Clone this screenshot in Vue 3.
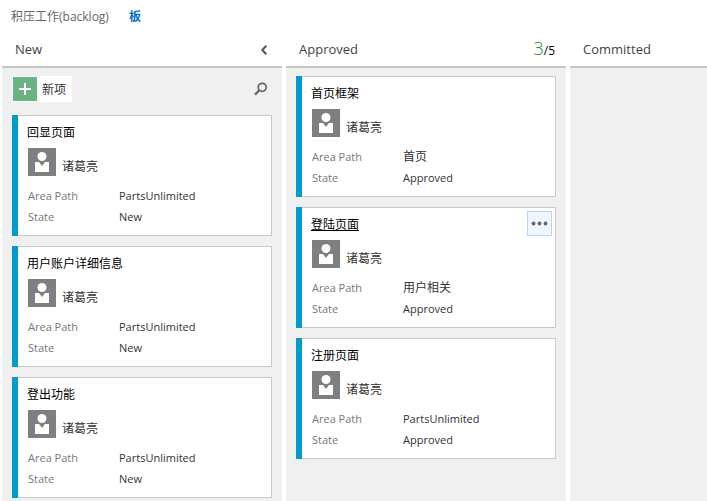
<script setup>
import { ref } from 'vue'

const columns = ref([
  {
    name: 'New',
    collapsible: true,
    canAdd: true,
    cards: [
      { title: '回显页面', owner: '诸葛亮', area: 'PartsUnlimited', state: 'New' },
      { title: '用户账户详细信息', owner: '诸葛亮', area: 'PartsUnlimited', state: 'New' },
      { title: '登出功能', owner: '诸葛亮', area: 'PartsUnlimited', state: 'New' },
    ],
  },
  {
    name: 'Approved',
    limit: 5,
    cards: [
      { title: '首页框架', owner: '诸葛亮', area: '首页', state: 'Approved' },
      { title: '登陆页面', owner: '诸葛亮', area: '用户相关', state: 'Approved', active: true },
      { title: '注册页面', owner: '诸葛亮', area: 'PartsUnlimited', state: 'Approved' },
    ],
  },
  { name: 'Committed', cards: [] },
])

const isLatin = (text) => /^[\x20-\x7e]+$/.test(text)
</script>

<template>
  <div class="page">
    <nav class="tabs">
      <a class="tab" href="#backlog">积压工作(backlog)</a>
      <a class="tab current" href="#board" aria-current="page">板</a>
    </nav>

    <main class="board">
      <section v-for="column in columns" :key="column.name" class="column">
        <header class="column-head">
          <h2 class="column-name">{{ column.name }}</h2>
          <button v-if="column.collapsible" class="icon-button" type="button" aria-label="Collapse">
            <svg width="8" height="10" viewBox="0 0 8 10">
              <path d="M6.3 0.8 L2.3 5 L6.3 9.2" fill="none" stroke="#555" stroke-width="2" />
            </svg>
          </button>
          <div v-if="column.limit" class="wip">
            <span class="count">{{ column.cards.length }}</span><span class="limit">/{{ column.limit }}</span>
          </div>
        </header>

        <div class="lane">
          <div v-if="column.canAdd" class="toolbar">
            <button class="add" type="button">
              <span class="plus">
                <svg width="12" height="12" viewBox="0 0 12 12">
                  <path d="M6 0 V12 M0 6 H12" stroke="#fff" stroke-width="2" />
                </svg>
              </span>
              <span class="add-label">新项</span>
            </button>
            <button class="icon-button" type="button" aria-label="Search">
              <svg width="14" height="14" viewBox="0 0 14 14">
                <circle cx="8.2" cy="5.3" r="4" fill="none" stroke="#666" stroke-width="1.7" />
                <path d="M5.4 8.2 L1 12.6" stroke="#666" stroke-width="2.2" />
              </svg>
            </button>
          </div>

          <article v-for="card in column.cards" :key="card.title" class="card">
            <div class="card-body">
              <a class="title" :class="{ hovered: card.active }" href="#item">{{ card.title }}</a>
              <button v-if="card.active" class="more" type="button" aria-label="More actions">
                <svg width="17" height="5" viewBox="0 0 17 5">
                  <circle cx="2.5" cy="2.5" r="1.9" fill="#666" />
                  <circle cx="8.5" cy="2.5" r="1.9" fill="#666" />
                  <circle cx="14.5" cy="2.5" r="1.9" fill="#666" />
                </svg>
              </button>
              <div class="owner">
                <svg width="28" height="28" viewBox="0 0 28 28">
                  <rect width="28" height="28" fill="#7f7f7f" />
                  <circle cx="14" cy="8.5" r="4.5" fill="#fff" />
                  <path d="M7 14 H11 L14 18 L17 14 H21 V24 H7 Z" fill="#fff" />
                </svg>
                <span class="owner-name">{{ card.owner }}</span>
              </div>
              <dl class="fields">
                <dt>Area Path</dt>
                <dd :class="{ cjk: !isLatin(card.area) }">{{ card.area }}</dd>
                <dt>State</dt>
                <dd>{{ card.state }}</dd>
              </dl>
            </div>
          </article>
        </div>
      </section>
    </main>
  </div>
</template>

<style>
body {
  margin: 0;
  background: #fff;
}
</style>

<style scoped>
.page {
  display: flex;
  flex-direction: column;
  min-height: 100vh;
  overflow: hidden;
  font: 12px/16px "Open Sans", "Noto Sans CJK SC", sans-serif;
  color: #333;
}

button {
  padding: 0;
  border: 0;
  background: none;
  font: inherit;
  color: inherit;
  cursor: pointer;
}

.tabs {
  display: flex;
  gap: 20px;
  padding: 9px 11px 7px;
}

.tab {
  color: #666;
  text-decoration: none;
}

.current {
  color: #0072c6;
  font-weight: 700;
}

.board {
  display: flex;
  flex: 1;
  gap: 4px;
  padding-left: 2px;
}

.column {
  display: flex;
  flex: 0 0 280px;
  flex-direction: column;
}

.column-head {
  display: flex;
  align-items: center;
  justify-content: space-between;
  box-sizing: border-box;
  height: 36px;
  padding: 0 11px 0 13px;
  border-bottom: 2px solid #c6c6c6;
}

.column-name {
  margin: 0;
  font-size: 13px;
  font-weight: 400;
  color: #444;
}

.icon-button {
  display: flex;
  padding: 2px 3px 0;
}

.wip {
  line-height: 20px;
}

.count {
  font-size: 18px;
  font-weight: 300;
  color: #228b35;
}

.limit {
  color: #000;
}

.lane {
  display: flex;
  flex: 1;
  flex-direction: column;
  gap: 10px;
  padding: 8px 10px 0;
  background: #f0f0f0;
}

.toolbar {
  display: flex;
  align-items: center;
  justify-content: space-between;
  margin-bottom: 3px;
}

.toolbar .icon-button {
  padding: 0 4px;
}

.add {
  display: flex;
  align-items: center;
  gap: 5px;
  padding: 1px 6px 1px 1px;
  background: #fff;
}

.add-label {
  padding-top: 2px;
}

.plus {
  display: flex;
  align-items: center;
  justify-content: center;
  width: 24px;
  height: 24px;
  background: #6bb384;
}

.card {
  border-left: 6px solid #009ccc;
}

.card-body {
  position: relative;
  padding: 9px 10px 10px 9px;
  border: 1px solid #c8c8c8;
  border-left: 0;
  background: #fff;
}

.title {
  display: block;
  width: max-content;
  color: #000;
  text-decoration: none;
}

.hovered {
  text-decoration: underline;
}

.more {
  position: absolute;
  top: 3px;
  right: 3px;
  display: flex;
  align-items: center;
  justify-content: center;
  box-sizing: border-box;
  width: 25px;
  height: 25px;
  border: 1px solid #b5d3fb;
  background: #f0f6ff;
}

.owner {
  display: flex;
  align-items: flex-end;
  gap: 6px;
  margin: 7px 0 0 1px;
}

.owner-name {
  padding-bottom: 1px;
}

.fields {
  display: grid;
  grid-template-columns: 91px 1fr;
  row-gap: 5px;
  margin: 12px 0 0 1px;
  font-size: 11px;
}

dt {
  color: #777;
}

dd {
  margin: 0;
}

.cjk {
  font-size: 12px;
}
</style>
